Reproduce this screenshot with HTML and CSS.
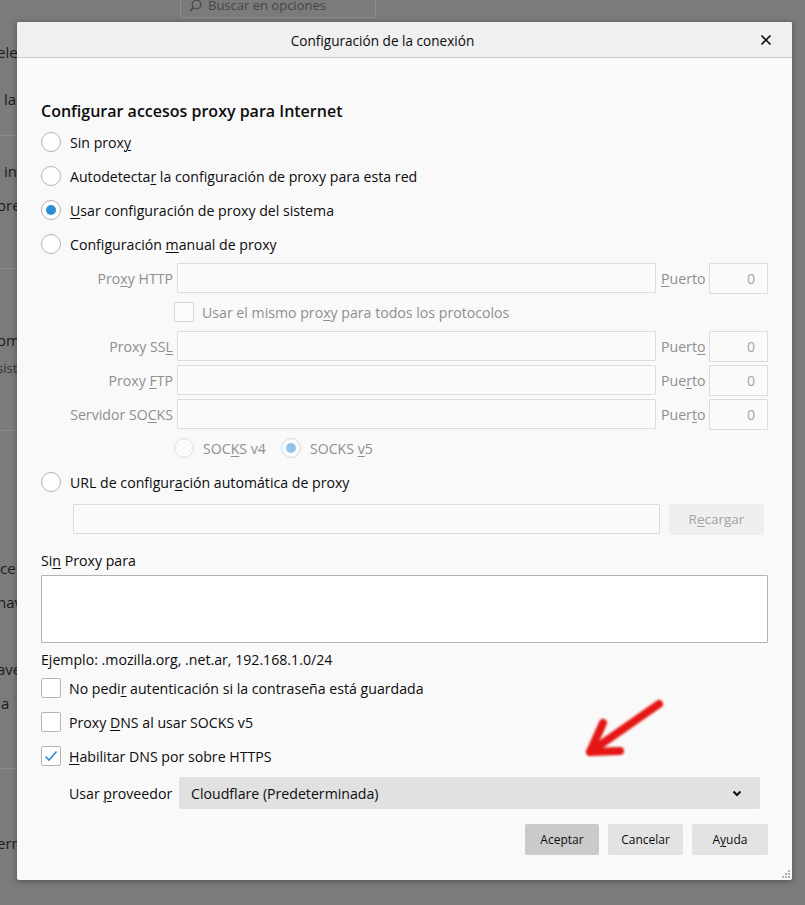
FILE: index.html
```html
<!DOCTYPE html>
<html lang="es">
<head>
<meta charset="utf-8">
<title>Configuración de la conexión</title>
<link rel="stylesheet" href="styles.css">
</head>
<body>
<div class="page">
  <div class="topbar">
    <div class="search">
      <svg class="mag" width="13" height="13" viewBox="0 0 13 13"><circle cx="7.5" cy="5.5" r="4.3" fill="none" stroke="#4a4a4a" stroke-width="1.3"/><line x1="4.4" y1="8.6" x2="1" y2="12" stroke="#4a4a4a" stroke-width="1.5"/></svg>
      <span>Buscar en opciones</span>
    </div>
  </div>
  <div class="bgcol">
    <div class="frag f-ele">ele</div>
    <div class="frag f-la">la</div>
    <div class="sep s1"></div>
    <div class="frag f-in">in</div>
    <div class="frag f-ore">ore</div>
    <div class="sep s2"></div>
    <div class="frag f-om">om</div>
    <div class="frag small f-sist">sist</div>
    <div class="sep s3"></div>
    <div class="frag f-ce">ce</div>
    <div class="frag f-nav">nav</div>
    <div class="frag f-ave">ave</div>
    <div class="frag f-a">a</div>
    <div class="sep s4"></div>
    <div class="frag f-ern">ern</div>
  </div>
</div>

<div class="dialog">
  <div class="dlg-head">
    <span></span>
    <div class="title">Configuración de la conexión</div>
    <button class="close" type="button" aria-label="Cerrar">
      <svg width="12" height="12" viewBox="0 0 12 12"><path d="M1.5 1.5 L10.5 10.5 M10.5 1.5 L1.5 10.5" stroke="#0c0c0d" stroke-width="1.6" fill="none"/></svg>
    </button>
  </div>
  <div class="dlg-body">
    <h1 class="heading">Configurar accesos proxy para Internet</h1>

    <div class="row"><span class="radio"></span><span class="txt">Sin prox<u>y</u></span></div>
    <div class="row"><span class="radio"></span><span class="txt">Autodetecta<u>r</u> la configuración de proxy para esta red</span></div>
    <div class="row"><span class="radio on"></span><span class="txt"><u>U</u>sar configuración de proxy del sistema</span></div>
    <div class="row"><span class="radio"></span><span class="txt">Configuración <u>m</u>anual de proxy</span></div>

    <div class="row prow">
      <span class="plabel">Pro<u>x</u>y HTTP</span>
      <span class="field host"></span>
      <span class="portl"><u>P</u>uerto</span>
      <span class="field port">0</span>
    </div>
    <div class="row same">
      <span class="check dis"></span><span class="txt dtxt">Usar el mismo pro<u>x</u>y para todos los protocolos</span>
    </div>
    <div class="row prow">
      <span class="plabel">Proxy SS<u>L</u></span>
      <span class="field host"></span>
      <span class="portl">Puert<u>o</u></span>
      <span class="field port">0</span>
    </div>
    <div class="row prow">
      <span class="plabel">Proxy <u>F</u>TP</span>
      <span class="field host"></span>
      <span class="portl">Pue<u>r</u>to</span>
      <span class="field port">0</span>
    </div>
    <div class="row prow">
      <span class="plabel">Servidor SO<u>C</u>KS</span>
      <span class="field host"></span>
      <span class="portl">Puer<u>t</u>o</span>
      <span class="field port">0</span>
    </div>
    <div class="row socks">
      <span class="radio dis"></span><span class="txt dtxt v4">SOC<u>K</u>S v4</span>
      <span class="radio dis on"></span><span class="txt dtxt">SOCKS <u>v</u>5</span>
    </div>

    <div class="row"><span class="radio"></span><span class="txt">URL de configur<u>a</u>ción automática de proxy</span></div>
    <div class="urlrow">
      <span class="field url"></span>
      <span class="btn reload">R<u>e</u>cargar</span>
    </div>

    <div class="lbl">Si<u>n</u> Proxy para</div>
    <div class="textarea"></div>
    <div class="example">Ejemplo: .mozilla.org, .net.ar, 192.168.1.0/24</div>

    <div class="row"><span class="check"></span><span class="txt ctxt">No pedi<u>r</u> autenticación si la contraseña está guardada</span></div>
    <div class="row"><span class="check"></span><span class="txt ctxt">Proxy <u>D</u>NS al usar SOCKS v5</span></div>
    <div class="row"><span class="check on"><svg width="14" height="12" viewBox="0 0 14 12"><path d="M1.5 6.5 L5 10 L12.5 1.5" fill="none" stroke="#2a8ad4" stroke-width="1.6"/></svg></span><span class="txt ctxt"><u>H</u>abilitar DNS por sobre HTTPS</span></div>

    <div class="provrow">
      <span class="provl">Usar <u>p</u>roveedor</span>
      <div class="select">
        <span>Cloudflare (Predeterminada)</span>
        <svg width="10" height="7" viewBox="0 0 10 7"><path d="M1.5 1.5 L5 5 L8.5 1.5" fill="none" stroke="#0c0c0d" stroke-width="2"/></svg>
      </div>
    </div>

    <div class="buttons">
      <span class="btn primary">Aceptar</span>
      <span class="btn">Cancelar</span>
      <span class="btn">A<u>y</u>uda</span>
    </div>
  </div>

  <svg class="arrow" width="120" height="80" viewBox="0 0 120 80">
    <defs><filter id="soft" x="-20%" y="-20%" width="140%" height="140%"><feGaussianBlur stdDeviation="0.9"/></filter></defs>
    <g filter="url(#soft)" stroke="#e51414" stroke-linecap="round" stroke-linejoin="round" fill="none">
      <path d="M99 14 L30 62" stroke-width="8"/>
      <path d="M43 33 L30 62 L60 61" stroke-width="8"/>
    </g>
  </svg>
  <svg class="grip" width="10" height="10" viewBox="0 0 10 10">
    <g fill="#b5b5b5"><rect x="7" y="1" width="2" height="2"/><rect x="4" y="4" width="2" height="2"/><rect x="7" y="4" width="2" height="2"/><rect x="1" y="7" width="2" height="2"/><rect x="4" y="7" width="2" height="2"/><rect x="7" y="7" width="2" height="2"/></g>
  </svg>
</div>
</body>
</html>
```

FILE: styles.css
```css
* { box-sizing: border-box; }
html, body {
  margin: 0;
  padding: 0;
  width: 805px;
  height: 905px;
  overflow: hidden;
  background: #7b7b7b;
  font-family: "Open Sans", "Noto Sans", sans-serif;
  color: #0c0c0d;
}
u { text-underline-offset: 2px; text-decoration-thickness: 1px; }

/* background page */
.page { width: 805px; height: 905px; }
.topbar { display: flex; padding-left: 180px; }
.search {
  margin-top: -12px;
  width: 196px;
  height: 30px;
  border: 1px solid #8f8f8f;
  border-radius: 2px;
  display: flex;
  align-items: center;
  padding: 4px 0 0 8px;
  gap: 6px;
  font-size: 13px;
  color: #464646;
}
.mag { flex: none; }
.bgcol { display: flex; flex-direction: column; width: 17px; overflow: hidden; margin-top: -18px; }
.frag { font-size: 15px; line-height: 20px; height: 20px; color: #1b1b1b; white-space: nowrap; }
.frag.small { font-size: 13px; color: #333; }
.sep { height: 1px; background: #8a8a8a; flex: none; width: 17px; }
.f-ele { margin-top: 42px; margin-left: -3px; }
.f-la { margin-top: 27px; margin-left: 4px; }
.s1 { margin-top: 26px; }
.f-in { margin-top: 25px; margin-left: 4px; }
.f-ore { margin-top: 14px; margin-left: -3px; }
.s2 { margin-top: 53px; }
.f-om { margin-top: 61px; margin-left: -3px; }
.f-sist { margin-top: 8px; margin-left: -3px; }
.s3 { margin-top: 52px; }
.f-ce { margin-top: 127px; margin-left: 0px; }
.f-nav { margin-top: 14px; margin-left: -3px; }
.f-ave { margin-top: 47px; margin-left: -3px; }
.f-a { margin-top: 14px; margin-left: 1px; }
.s4 { margin-top: 55px; }
.f-ern { margin-top: 64px; margin-left: -3px; }

/* dialog */
.dialog {
  position: absolute;
  left: 17px;
  top: 22px;
  width: 775px;
  height: 858px;
  background: #f9f9f9;
  border-radius: 2px;
  box-shadow: 0 1px 6px rgba(0,0,0,0.35);
}
.dlg-head {
  height: 36px;
  background: #f0f0f0;
  border-bottom: 1px solid #c6c6c6;
  border-radius: 2px 2px 0 0;
  display: grid;
  grid-template-columns: 1fr auto 1fr;
  align-items: center;
}
.title { font-size: 13.6px; padding-top: 1px; margin-right: 44px; }
.close {
  justify-self: end;
  margin-right: 16px;
  width: 20px; height: 20px;
  border: 0; background: transparent; padding: 0;
  display: flex; align-items: center; justify-content: center;
}
.dlg-body { padding: 41px 24px 0 24px; font-size: 14.15px; }
.heading {
  margin: 0 0 2px 0;
  height: 24px;
  line-height: 24px;
  font-size: 16px;
  font-weight: 600;
}
.row { height: 34px; display: flex; align-items: center; white-space: nowrap; }
.txt { margin-left: 9px; }
.ctxt { margin-left: 8px; }
.dtxt { color: #8f8f8f; }

.radio {
  flex: none;
  width: 20px; height: 20px;
  border: 1px solid #b3b3b3;
  border-radius: 50%;
  background: #fff;
  display: flex; align-items: center; justify-content: center;
}
.radio.on::after {
  content: "";
  width: 10px; height: 10px; border-radius: 50%;
  background: #2a8fd6;
}
.radio.dis { border-color: #dadada; background: #fbfbfb; }
.radio.dis.on::after { background: #8fc5eb; }

.check {
  flex: none;
  width: 20px; height: 20px;
  border: 1px solid #b3b3b3;
  border-radius: 2px;
  background: #fff;
  display: flex; align-items: center; justify-content: center;
}
.check.dis { border-color: #dadada; background: #fbfbfb; }

.prow { color: #8f8f8f; }
.plabel { width: 132px; text-align: right; flex: none; }
.field {
  height: 30px;
  border: 1px solid #dcdcdc;
  border-radius: 1px;
  background: #fafafa;
}
.host { margin-left: 4px; flex: 1; }
.portl { margin-left: 5px; width: 44px; flex: none; }
.port {
  margin-left: 4px; width: 59px; flex: none; height: 31px;
  display: flex; align-items: center; justify-content: flex-end;
  padding-right: 12px; color: #a5a5a5;
}
.same { padding-left: 133px; }
.same .txt { margin-left: 8px; }
.socks { padding-left: 133px; }
.socks .v4 { margin-right: 15px; }

.urlrow { height: 40px; display: flex; align-items: center; padding-left: 32px; padding-right: 4px; gap: 9px; }
.url { flex: 1; height: 30px; }
.btn {
  height: 31px;
  display: flex; align-items: center; justify-content: center;
  background: #e3e3e3;
  border-radius: 2px;
  font-size: 12px;
  flex: none;
}
.reload { width: 95px; background: #efefef; color: #a3a3a3; font-size: 13.5px; }

.lbl { margin-top: 11px; height: 22px; line-height: 22px; }
.textarea {
  margin-top: 3px;
  height: 68px;
  background: #fff;
  border: 1px solid #b2b2b2;
  border-radius: 1px;
}
.example { margin-top: 6px; height: 22px; line-height: 22px; }

.provrow { margin-top: 4px; display: flex; align-items: center; padding-left: 28px; padding-right: 8px; }
.provl { width: 110px; flex: none; }
.select {
  flex: 1;
  height: 32px;
  background: #e1e1e1;
  border-radius: 2px;
  display: flex; align-items: center; justify-content: space-between;
  padding: 0 18px 0 12px;
}
.buttons { margin-top: 15px; display: flex; justify-content: flex-end; gap: 9px; }
.buttons .btn { width: 75px; }
.buttons .primary { width: 74px; background: #cacaca; }
.buttons .btn:last-child { width: 76px; }

.arrow { position: absolute; left: 543px; top: 668px; }
.grip { position: absolute; right: 1px; bottom: 1px; }
```
